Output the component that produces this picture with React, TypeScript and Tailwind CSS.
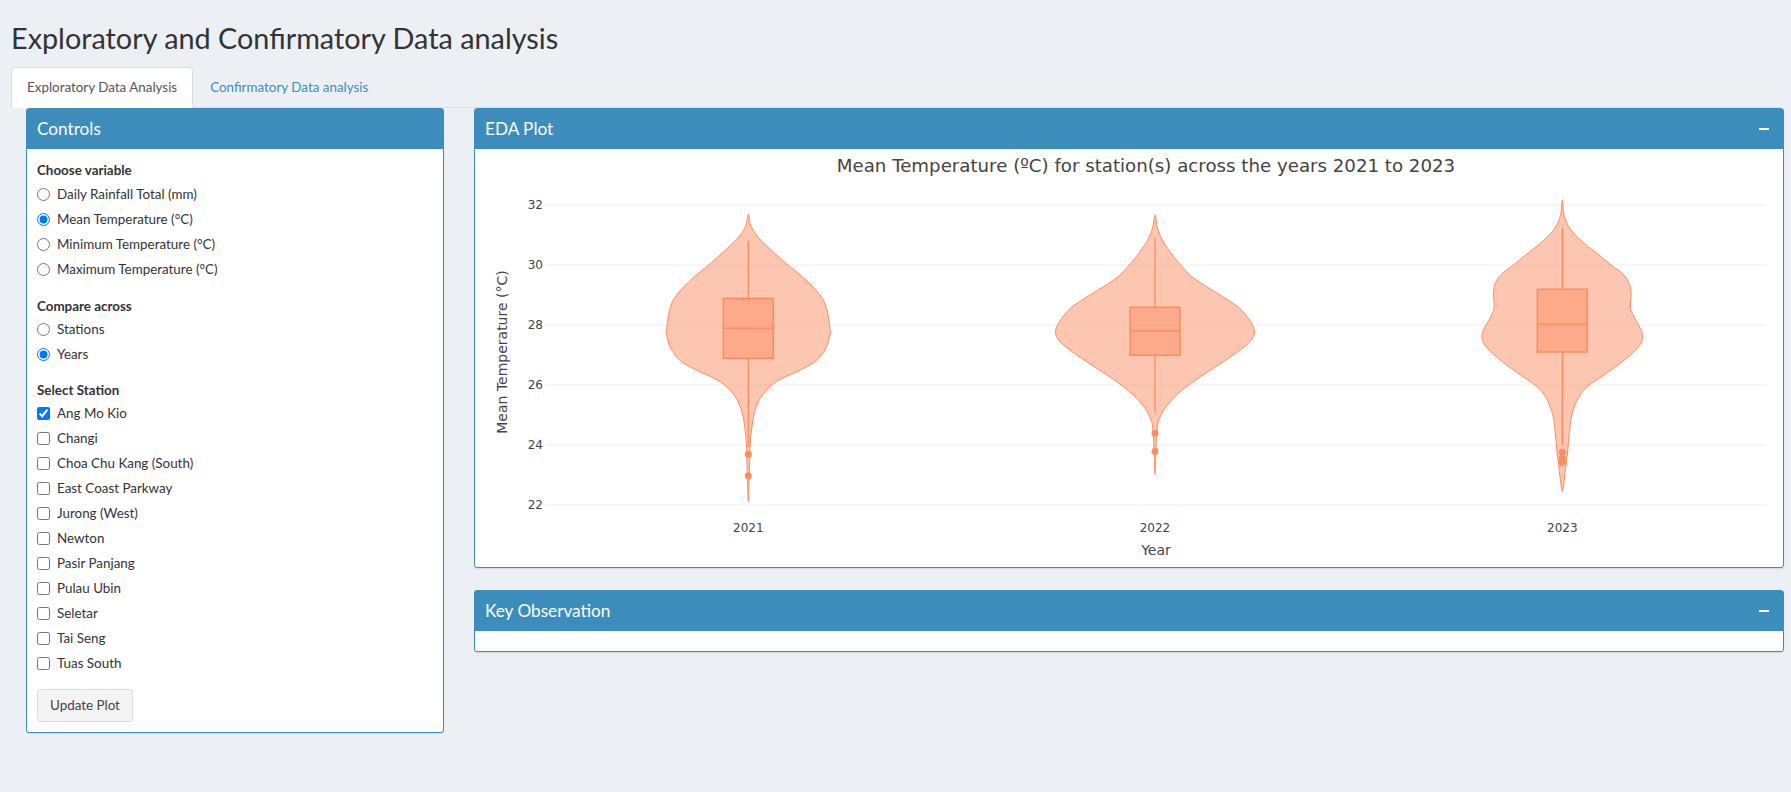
import React from "react";

type Pt = [number, number];

// y pixel for a temperature value
const yOf = (v: number) => 205 + (32 - v) * 30;

// profiles: [y, half width]
const violins = [
  {
    label: "2021",
    cx: 748.3,
    profile: [
      [214.3, 0], [225, 2.3], [235, 8], [245, 17.5], [255, 28.3], [265.3, 40], [278.3, 55.8],
      [295, 71.7], [308.3, 78.3], [328.3, 81.7], [335, 81.7], [348.3, 77.5], [361.7, 66.7],
      [371.7, 48.3], [381.7, 28], [395, 14.2], [408.3, 7.5], [421.7, 4.3], [435, 2.7],
      [448.3, 1.7], [475, 1], [501.7, 0],
    ] as Pt[],
    q3: 298.3, med: 328.3, q1: 358.3, wTop: 241, wBot: 447,
    outliers: [454.3, 475.7],
  },
  {
    label: "2022",
    cx: 1155,
    profile: [
      [215, 0], [228.3, 2.5], [241.7, 8.3], [255, 17.5], [265.3, 26], [278.3, 39], [295, 65],
      [308.3, 84.7], [321.7, 95.5], [331.7, 99.5], [341.7, 95], [355, 78.3], [368.3, 58.3],
      [381.7, 38.3], [395, 21.7], [408.3, 10], [421.7, 3.3], [435, 1.8], [448.3, 1], [474.3, 0],
    ] as Pt[],
    q3: 307.3, med: 331, q1: 355.3, wTop: 237.7, wBot: 412.3,
    outliers: [433.3, 451.3],
  },
  {
    label: "2023",
    cx: 1562.3,
    profile: [
      [200, 0], [215, 1.8], [228.3, 7.5], [241.7, 20], [255, 36.7], [265.3, 49.2], [275, 61.7],
      [285, 67.5], [295, 68.8], [308.3, 68.3], [318.3, 72.5], [328.3, 78], [338.3, 80.3],
      [348.3, 75], [361.7, 60], [375, 41.7], [388.3, 23.3], [401.7, 14.2], [415, 9.5],
      [428.3, 7.5], [441.7, 6.2], [455, 5], [468.3, 3.3], [481.7, 1.7], [491.7, 0],
    ] as Pt[],
    q3: 289.3, med: 324.3, q1: 352, wTop: 228.3, wBot: 445,
    outliers: [452.3, 458.3, 462.3],
  },
];

// closed catmull-rom through the outline points
function violinPath(cx: number, profile: Pt[]) {
  const right: Pt[] = profile.map(([y, h]) => [cx + h, y]);
  const left: Pt[] = profile
    .slice(1, -1)
    .reverse()
    .map(([y, h]) => [cx - h, y]);
  const pts = [...right, ...left];
  const n = pts.length;
  let d = `M${pts[0][0].toFixed(1)},${pts[0][1].toFixed(1)}`;
  for (let i = 0; i < n; i++) {
    const p0 = pts[(i - 1 + n) % n];
    const p1 = pts[i];
    const p2 = pts[(i + 1) % n];
    const p3 = pts[(i + 2) % n];
    const c1x = p1[0] + (p2[0] - p0[0]) / 6;
    const c1y = p1[1] + (p2[1] - p0[1]) / 6;
    const c2x = p2[0] - (p3[0] - p1[0]) / 6;
    const c2y = p2[1] - (p3[1] - p1[1]) / 6;
    d += ` C${c1x.toFixed(1)},${c1y.toFixed(1)} ${c2x.toFixed(1)},${c2y.toFixed(1)} ${p2[0].toFixed(1)},${p2[1].toFixed(1)}`;
  }
  return d + " Z";
}

function EdaPlot() {
  const ticks = [22, 24, 26, 28, 30, 32];
  return (
    <svg
      width={1308}
      height={418}
      viewBox="475 149 1308 418"
      className="block font-['DejaVu_Sans',sans-serif]"
    >
      <text x={1146} y={172} textAnchor="middle" fontSize={18.2} fill="#444">
        Mean Temperature (ºC) for station(s) across the years 2021 to 2023
      </text>

      {ticks.map((t) => (
        <g key={t}>
          <line x1={546} x2={1766} y1={yOf(t)} y2={yOf(t)} stroke="#eee" strokeWidth={1} />
          <text x={543} y={yOf(t) + 4.3} textAnchor="end" fontSize={12} fill="#444">
            {t}
          </text>
        </g>
      ))}

      <text
        x={507}
        y={352}
        textAnchor="middle"
        fontSize={14}
        fill="#444"
        transform="rotate(-90 507 352)"
      >
        Mean Temperature (°C)
      </text>

      {violins.map((v) => (
        <g key={v.label}>
          <path
            d={violinPath(v.cx, v.profile)}
            fill="#fc8d62"
            fillOpacity={0.5}
            stroke="#fc8d62"
            strokeWidth={1}
          />
          <line x1={v.cx} x2={v.cx} y1={v.wTop} y2={v.q3} stroke="#fc8d62" strokeWidth={1.3} />
          <line x1={v.cx} x2={v.cx} y1={v.q1} y2={v.wBot} stroke="#fc8d62" strokeWidth={1.3} />
          <rect
            x={v.cx - 25}
            y={v.q3}
            width={50}
            height={v.q1 - v.q3}
            fill="#fc8d62"
            fillOpacity={0.5}
            stroke="#fc8d62"
            strokeWidth={1.5}
          />
          <line x1={v.cx - 25} x2={v.cx + 25} y1={v.med} y2={v.med} stroke="#fc8d62" strokeWidth={1.5} />
          {v.outliers.map((o) => (
            <circle key={o} cx={v.cx} cy={o} r={3.5} fill="#fc8d62" />
          ))}
          <text x={v.cx} y={532} textAnchor="middle" fontSize={12} fill="#444">
            {v.label}
          </text>
        </g>
      ))}

      <text x={1156} y={555} textAnchor="middle" fontSize={14} fill="#444">
        Year
      </text>
    </svg>
  );
}

function Box({
  title,
  collapsible,
  className,
  children,
}: {
  title: string;
  collapsible?: boolean;
  className?: string;
  children?: React.ReactNode;
}) {
  return (
    <div
      className={`bg-white border border-[#3c8dbc] rounded-[3px] shadow-[0_1px_1px_rgba(0,0,0,0.1)] ${className ?? ""}`}
    >
      <div className="h-[40px] bg-[#3c8dbc] flex items-center justify-between pl-[10px] pr-[14px] text-white">
        <span className="text-[17.2px] leading-none">{title}</span>
        {collapsible && <div className="w-[10px] h-[2px] bg-white" />}
      </div>
      {children}
    </div>
  );
}

const variables = [
  "Daily Rainfall Total (mm)",
  "Mean Temperature (°C)",
  "Minimum Temperature (°C)",
  "Maximum Temperature (°C)",
];

const stations = [
  "Ang Mo Kio",
  "Changi",
  "Choa Chu Kang (South)",
  "East Coast Parkway",
  "Jurong (West)",
  "Newton",
  "Pasir Panjang",
  "Pulau Ubin",
  "Seletar",
  "Tai Seng",
  "Tuas South",
];

function Controls() {
  return (
    <div className="px-[10px] pt-[10px] pb-[10px] text-[13.4px] text-[#333]">
      <div className="h-[23px] flex items-center font-bold">Choose variable</div>
      {variables.map((v, i) => (
        <label key={v} className="h-[25px] flex items-center gap-[7px]">
          <input type="radio" name="variable" defaultChecked={i === 1} className="m-0 w-[13px] h-[13px]" />
          <span>{v}</span>
        </label>
      ))}

      <div className="mt-[13px] h-[22px] flex items-center font-bold">Compare across</div>
      {["Stations", "Years"].map((v, i) => (
        <label key={v} className="h-[25px] flex items-center gap-[7px]">
          <input type="radio" name="compare" defaultChecked={i === 1} className="m-0 w-[13px] h-[13px]" />
          <span>{v}</span>
        </label>
      ))}

      <div className="mt-[12px] h-[22px] flex items-center font-bold">Select Station</div>
      {stations.map((s, i) => (
        <label key={s} className="h-[25px] flex items-center gap-[7px]">
          <input type="checkbox" defaultChecked={i === 0} className="m-0 w-[13px] h-[13px]" />
          <span>{s}</span>
        </label>
      ))}

      <button className="mt-[13px] h-[33px] px-[12px] bg-[#f4f4f4] border border-[#ddd] rounded-[3px] text-[#444] text-[13.4px]">
        Update Plot
      </button>
    </div>
  );
}

export default function App() {
  return (
    <div className="min-h-screen bg-[#ecf0f5] font-['Lato',sans-serif] text-[#333]">
      <div className="px-[11px] pt-[22px]">
        <h2 className="text-[28.8px] leading-[32px] font-normal text-[#333]">
          Exploratory and Confirmatory Data analysis
        </h2>

        <div className="mt-[13px] flex border-b border-[#ddd]">
          <div className="h-[41px] -mb-px px-[15px] flex items-center bg-white border border-[#ddd] border-b-transparent rounded-t-[4px] text-[13.4px] text-[#555]">
            Exploratory Data Analysis
          </div>
          <div className="h-[40px] ml-[2px] px-[15px] flex items-center text-[13.4px] text-[#3c8dbc]">
            Confirmatory Data analysis
          </div>
        </div>

        <div className="flex items-start pl-[15px]">
          <Box title="Controls" className="w-[418px] shrink-0">
            <Controls />
          </Box>

          <div className="ml-[30px] w-[1310px] shrink-0">
            <Box title="EDA Plot" collapsible>
              <EdaPlot />
            </Box>
            <Box title="Key Observation" collapsible className="mt-[22px]">
              <div className="h-[20px]" />
            </Box>
          </div>
        </div>
      </div>
    </div>
  );
}
